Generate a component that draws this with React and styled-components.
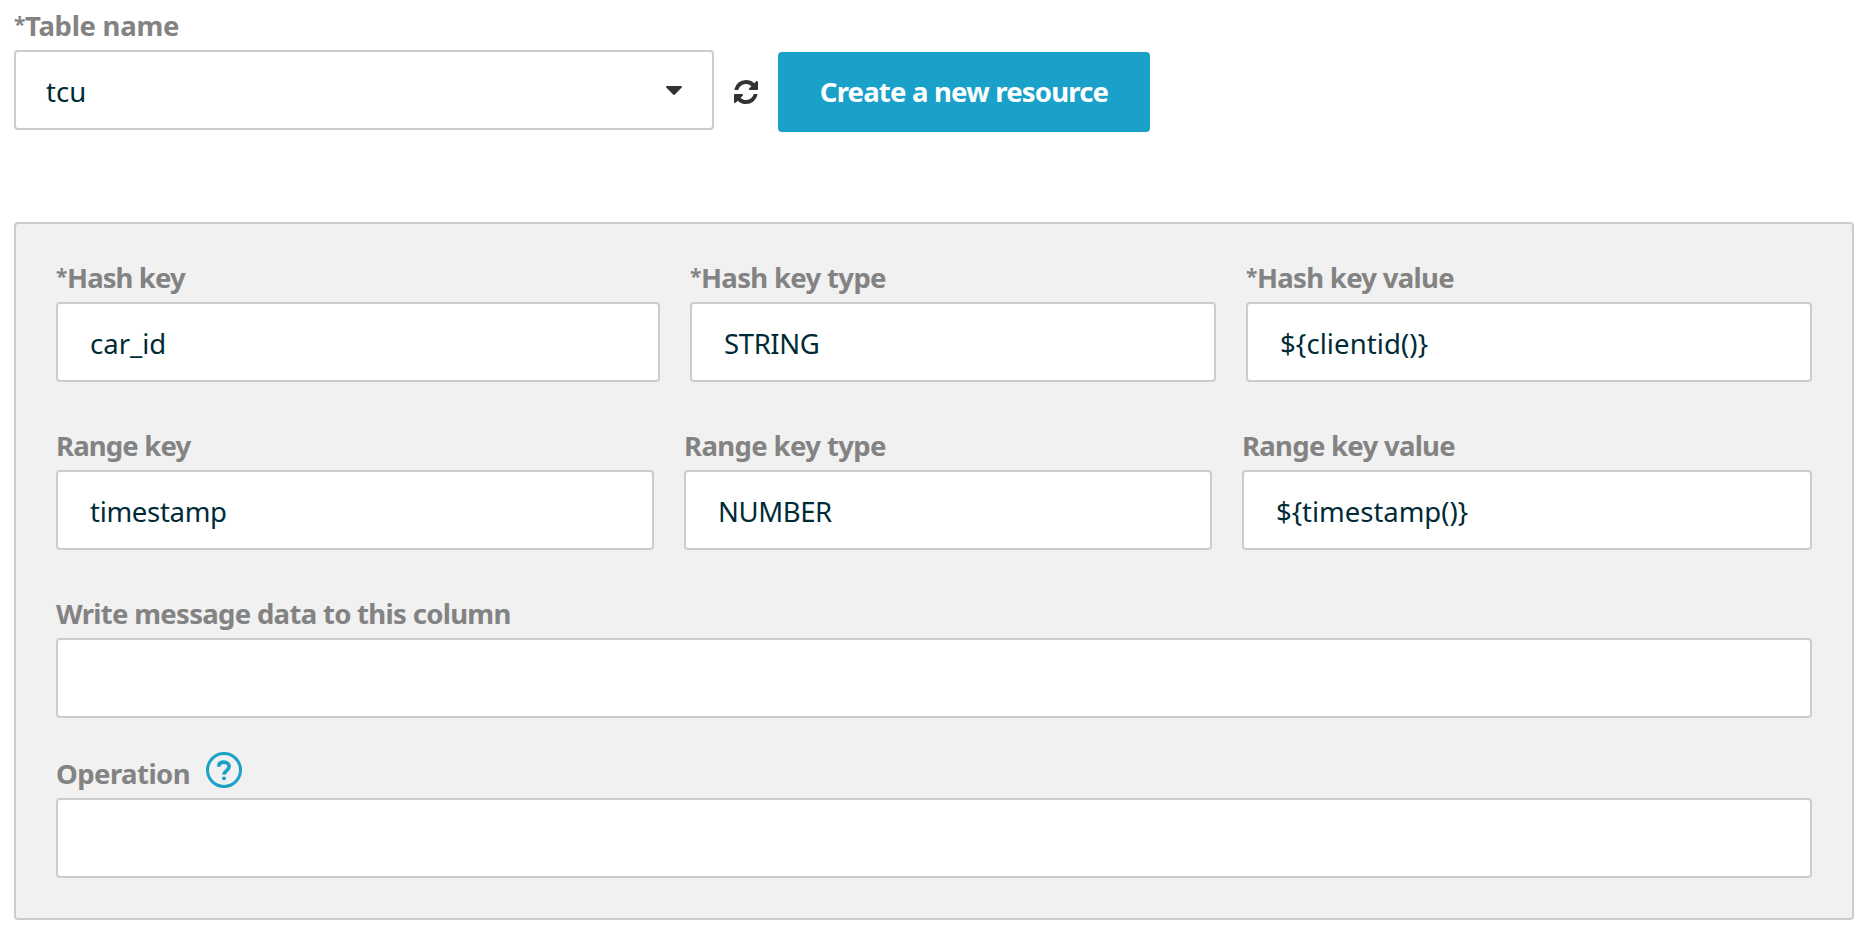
import React from "react";
import styled, { createGlobalStyle } from "styled-components";

const GlobalStyle = createGlobalStyle`
  *, *::before, *::after { box-sizing: border-box; }
  body {
    margin: 0;
    background: #fff;
    font-family: "Noto Sans", "Open Sans", sans-serif;
    font-size: 27.5px;
  }
`;

const Page = styled.main`
  display: flex;
  flex-direction: column;
  gap: 90px;
  height: 946px;
  padding: 12px 10px 0 14px;
  overflow: hidden;
`;

const Group = styled.div`
  display: flex;
  flex-direction: column;
  gap: 10px;
  min-width: 0;
`;

const Label = styled.label`
  display: flex;
  height: 28px;
  line-height: 28px;
  font-weight: 700;
  color: #838383;
  white-space: pre;
  letter-spacing: ${(p) => p.$track || 0}px;
`;

const Star = styled.span`
  width: 11px;
  margin-top: -1px;
  font-size: 21px;
  line-height: 26px;
  letter-spacing: 0;
`;

const ToolRow = styled.div`
  display: flex;
  align-items: flex-start;
  height: 82px;
`;

const Select = styled.button`
  display: flex;
  align-items: center;
  justify-content: space-between;
  width: 700px;
  height: 80px;
  padding: 2px 30px 0;
  border: 2px solid #ccc;
  border-radius: 4px;
  background: #fff;
  color: #002b36;
  font: inherit;
`;

const Caret = styled.svg`
  width: 16px;
  height: 9px;
  margin-bottom: 2px;
  fill: #333;
`;

const RefreshButton = styled.button`
  display: flex;
  align-items: center;
  justify-content: center;
  width: 64px;
  height: 84px;
  padding: 0;
  border: 0;
  background: none;
`;

const RefreshIcon = styled.svg`
  width: 24px;
  height: 24px;
  fill: #333;
`;

const PrimaryButton = styled.button`
  width: 372px;
  height: 80px;
  margin-top: 2px;
  padding: 0 0 2px;
  border: 0;
  border-radius: 4px;
  background: #1aa1c9;
  color: #fff;
  font: inherit;
  font-weight: 700;
  letter-spacing: -0.8px;
`;

const Panel = styled.section`
  display: flex;
  flex-direction: column;
  gap: 50px;
  height: 698px;
  padding: 40px 40px 0;
  border: 2px solid #ccc;
  border-radius: 4px;
  background: #f1f1f1;
`;

const FieldRow = styled.div`
  display: grid;
  grid-template-columns: ${(p) => p.$columns};
  column-gap: 30px;
`;

const WideRows = styled.div`
  display: flex;
  flex-direction: column;
  gap: 42px;
`;

const Input = styled.input`
  width: 100%;
  height: 80px;
  padding: 2px 32px 0;
  border: 2px solid #ccc;
  border-radius: 4px;
  background: #fff;
  color: #002b36;
  font: inherit;
  letter-spacing: ${(p) => p.$track || 0}px;
  outline: none;
`;

const HelpIcon = styled.svg`
  width: 36px;
  height: 36px;
  margin: -8px 0 0 15.5px;
  fill: none;
  stroke: #1aa1c9;
  stroke-width: 3;
`;

function Field({ label, required, track, value, valueTrack, help }) {
  return (
    <Group>
      <Label $track={track}>
        {required && <Star>*</Star>}
        {label}
        {help}
      </Label>
      <Input $track={valueTrack} defaultValue={value} />
    </Group>
  );
}

const Help = () => (
  <HelpIcon viewBox="0 0 36 36">
    <circle cx="18" cy="18" r="16.5" />
    <path
      strokeWidth="3.6"
      d="M12.8 14.8v-.4c0-2.8 2.1-4.3 5.1-4.3s5.2 1.7 5.2 4.5c0 4.4-5.1 3.8-5.1 8.2"
    />
    <path strokeWidth="3.6" d="M18 24.8v3.2" />
  </HelpIcon>
);

const hashFields = [
  { label: "Hash key", required: true, track: -0.9, value: "car_id", valueTrack: 0 },
  { label: "Hash key type", required: true, track: -0.67, value: "STRING", valueTrack: -0.38 },
  { label: "Hash key value", required: true, track: -0.7, value: "${clientid()}", valueTrack: 0.1 },
];

const rangeFields = [
  { label: "Range key", track: -0.85, value: "timestamp", valueTrack: -0.3 },
  { label: "Range key type", track: -0.62, value: "NUMBER", valueTrack: -0.4 },
  { label: "Range key value", track: -0.72, value: "${timestamp()}", valueTrack: -0.03 },
];

export default function App() {
  return (
    <>
      <GlobalStyle />
      <Page>
        <Group>
          <Label $track={-0.28}>
            <Star>*</Star>Table name
          </Label>
          <ToolRow>
            <Select>
              tcu
              <Caret viewBox="0 0 16 9">
                <path d="M1 0h14q1.6.2.7 1.5L9.2 8.3q-1.2 1.1-2.4 0L.3 1.5Q-.6.2 1 0z" />
              </Caret>
            </Select>
            <RefreshButton aria-label="Refresh">
              <RefreshIcon viewBox="0 0 1536 1536">
                <path d="M1511 928q0 5-1 7-64 268-268 434.5t-478 166.5q-146 0-282.5-55t-243.5-157l-129 129q-19 19-45 19t-45-19-19-45v-448q0-26 19-45t45-19h448q26 0 45 19t19 45-19 45l-137 137q71 66 161 102t187 36q134 0 250-65t186-179q11-17 53-117 8-23 30-23h192q13 0 22.5 9.5t9.5 22.5zm25-800v448q0 26-19 45t-45 19h-448q-26 0-45-19t-19-45 19-45l138-138q-148-137-349-137-134 0-250 65t-186 179q-11 17-53 117-8 23-30 23h-199q-13 0-22.5-9.5t-9.5-22.5v-7q65-268 270-434.5t480-166.5q146 0 284 55.5t245 156.5l130-129q19-19 45-19t45 19 19 45z" />
              </RefreshIcon>
            </RefreshButton>
            <PrimaryButton>Create a new resource</PrimaryButton>
          </ToolRow>
        </Group>
        <Panel>
          <FieldRow $columns="604px 526px 1fr">
            {hashFields.map((f) => (
              <Field key={f.label} {...f} />
            ))}
          </FieldRow>
          <FieldRow $columns="598px 528px 1fr">
            {rangeFields.map((f) => (
              <Field key={f.label} {...f} />
            ))}
          </FieldRow>
          <WideRows>
            <Field label="Write message data to this column" track={-0.69} value="" />
            <Field label="Operation" track={-0.55} value="" help={<Help />} />
          </WideRows>
        </Panel>
      </Page>
    </>
  );
}
